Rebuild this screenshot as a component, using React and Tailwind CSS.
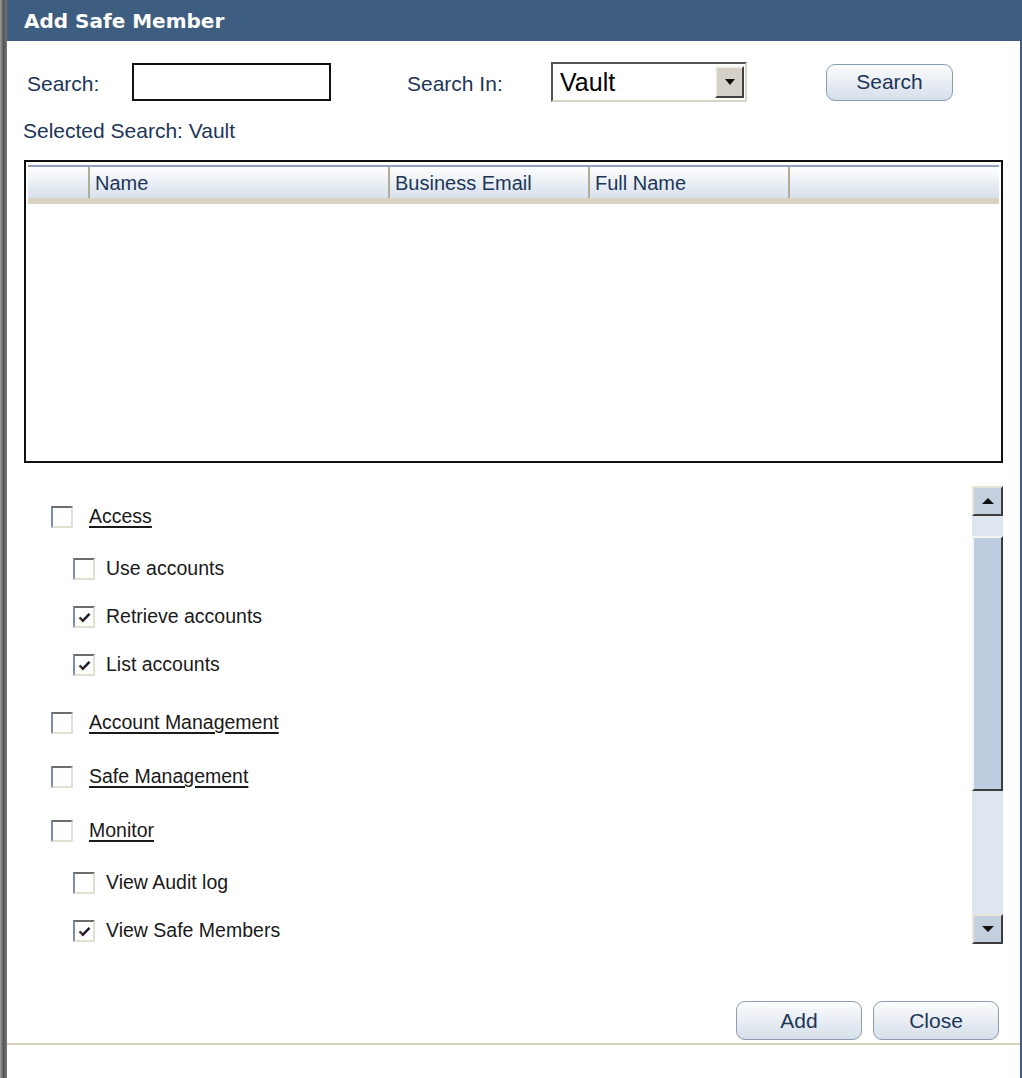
import { useState } from "react";

const font = { fontFamily: '"Liberation Sans", Arial, sans-serif' };

function CheckMark() {
  return (
    <svg width="13" height="11" viewBox="0 0 13 11" className="block">
      <path d="M1.5 5.5 L4.8 8.8 L11.5 1.8" fill="none" stroke="#1a1a2e" strokeWidth="2.4" />
      <path d="M1.5 6.4 L3.8 8.7" fill="none" stroke="#c46a1a" strokeWidth="1" />
    </svg>
  );
}

function Box({ checked }) {
  return (
    <span className="flex h-[22px] w-[22px] shrink-0 items-center justify-center border-2 border-t-[#6c6c6c] border-l-[#7d8cb4] border-r-[#e2ded2] border-b-[#e2ded2] bg-white">
      {checked && <CheckMark />}
    </span>
  );
}

function Arrow({ up }) {
  return (
    <svg width="14" height="8" viewBox="0 0 14 8" className="block">
      {up ? <path d="M1 7 L7 1 L13 7 Z" fill="#111" /> : <path d="M1 1 L13 1 L7 7 Z" fill="#111" />}
    </svg>
  );
}

function ScrollBtn({ up }) {
  return (
    <div className="flex h-[30px] w-[31px] items-center justify-center border-2 border-t-[#e8e4da] border-l-[#e8e4da] border-r-[#3c3c3c] border-b-[#3c3c3c] bg-[#c4d0e0]">
      <Arrow up={up} />
    </div>
  );
}

function WinButton({ children, className = "" }) {
  return (
    <button
      className={`flex items-center justify-center rounded-[9px] border border-[#8c9cb2] bg-gradient-to-b from-[#fbfcfd] to-[#d6dfea] text-[21px] text-[#1d3658] ${className}`}
    >
      {children}
    </button>
  );
}

export default function App() {
  const [perms, setPerms] = useState({
    access: false,
    use: false,
    retrieve: true,
    list: true,
    acct: false,
    safe: false,
    monitor: false,
    audit: false,
    members: true,
  });
  const toggle = (k) => setPerms((p) => ({ ...p, [k]: !p[k] }));

  const rows = [
    { k: "access", label: "Access", head: true, mt: "mt-[20px]" },
    { k: "use", label: "Use accounts", mt: "mt-[30px]" },
    { k: "retrieve", label: "Retrieve accounts", mt: "mt-[26px]" },
    { k: "list", label: "List accounts", mt: "mt-[26px]" },
    { k: "acct", label: "Account Management", head: true, mt: "mt-[36px]" },
    { k: "safe", label: "Safe Management", head: true, mt: "mt-[32px]" },
    { k: "monitor", label: "Monitor", head: true, mt: "mt-[32px]" },
    { k: "audit", label: "View Audit log", mt: "mt-[30px]" },
    { k: "members", label: "View Safe Members", mt: "mt-[26px]" },
  ];

  return (
    <div className="flex h-[1078px] w-[1022px] bg-white" style={font}>
      {/* left frame edge */}
      <div className="w-[7px] bg-gradient-to-r from-[#a0a0a0] via-[#555] to-[#777]" />

      <div className="flex flex-1 flex-col">
        {/* title bar */}
        <div className="flex h-[41px] items-center bg-[#3e5e81] pl-[17px]">
          <span className="text-[20px] font-bold text-white" style={{ fontFamily: '"DejaVu Sans", Verdana, sans-serif' }}>
            Add Safe Member
          </span>
        </div>

        {/* search row */}
        <div className="mt-[21px] flex h-[40px] items-center pl-[20px] text-[21px] text-[#1d3658]">
          <span className="w-[105px] pt-[4px]">Search:</span>
          <input className="h-[38px] w-[199px] border-2 border-[#111] bg-white px-2 outline-none" />
          <span className="ml-[76px] w-[144px] pt-[4px]">Search In:</span>
          <div className="flex h-[40px] w-[196px] items-center border-2 border-t-[#555] border-l-[#555] border-r-[#d8d4c8] border-b-[#d8d4c8] bg-white">
            <span className="flex-1 pl-[7px] text-[25px] leading-none text-black">Vault</span>
            <div className="mr-[1px] flex h-[32px] w-[29px] items-center justify-center border-2 border-t-[#f4f2ec] border-l-[#f4f2ec] border-r-[#404040] border-b-[#404040] bg-[#d4d0c8]">
              <svg width="10" height="6" viewBox="0 0 10 6">
                <path d="M0 0 L10 0 L5 6 Z" fill="#111" />
              </svg>
            </div>
          </div>
          <WinButton className="ml-[79px] h-[37px] w-[127px]">Search</WinButton>
        </div>

        <div className="mt-[17px] pl-[16px] text-[21px] leading-[24px] text-[#1d3658]">Selected Search: Vault</div>

        {/* results table */}
        <div className="ml-[17px] mt-[17px] h-[303px] w-[979px] border-2 border-[#111] px-[2px] pt-[3px]">
          <div className="h-[2px] bg-[#8ea2bc]" />
          <div className="flex h-[31px] bg-gradient-to-b from-white to-[#d7e0ec] text-[20px] text-[#1d3658]">
            <div className="w-[60px]" />
            <div className="flex w-[300px] items-center border-l-2 border-[#b4ad96] pl-[5px]">Name</div>
            <div className="flex w-[200px] items-center border-l-2 border-[#b4ad96] pl-[5px]">Business Email</div>
            <div className="flex w-[200px] items-center border-l-2 border-[#b4ad96] pl-[5px]">Full Name</div>
            <div className="flex-1 border-l-2 border-[#b4ad96]" />
          </div>
          <div className="h-[6px] bg-[#d8d4c0]" />
        </div>

        {/* permissions list */}
        <div className="mt-[23px] flex h-[458px]">
          <div className="flex flex-1 flex-col">
            {rows.map((r) => (
              <label
                key={r.k}
                className={`flex h-[22px] cursor-pointer items-center ${r.mt} ${r.head ? "pl-[44px]" : "pl-[66px]"}`}
                onClick={() => toggle(r.k)}
              >
                <Box checked={perms[r.k]} />
                <span
                  className={`text-[19.5px] text-[#1a1a1a] ${r.head ? "ml-[16px] underline decoration-[1.5px] underline-offset-[3px]" : "ml-[11px]"}`}
                >
                  {r.label}
                </span>
              </label>
            ))}
          </div>
          <div className="mr-[17px] flex w-[31px] flex-col bg-[#dfe6ef]">
            <ScrollBtn up />
            <div className="h-[20px]" />
            <div className="h-[255px] border-2 border-t-[#f4f4f4] border-l-[#f4f4f4] border-r-[#3c3c3c] border-b-[#3c3c3c] bg-[#bfcde0]" />
            <div className="flex-1" />
            <ScrollBtn />
          </div>
        </div>

        {/* bottom buttons */}
        <div className="mt-[57px] flex justify-end gap-[11px] pr-[21px]">
          <WinButton className="h-[39px] w-[126px]">Add</WinButton>
          <WinButton className="h-[39px] w-[126px]">Close</WinButton>
        </div>
        <div className="mt-[3px] h-[2px] bg-[#d4d0ba]" />
      </div>

      {/* right frame edge */}
      <div className="w-[2px] bg-[#3e5e81]" />
    </div>
  );
}
